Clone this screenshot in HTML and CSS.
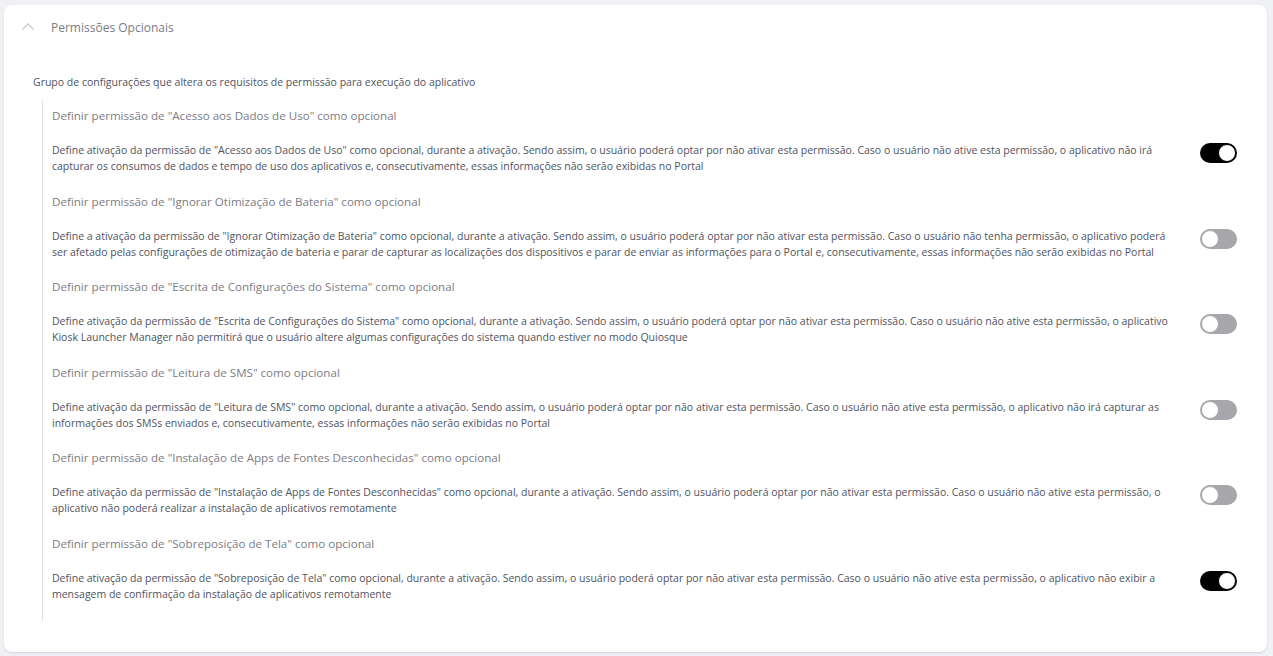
FILE: index.html
```html
<!DOCTYPE html>
<html lang="pt-BR">
<head>
<meta charset="utf-8">
<title>Permissões Opcionais</title>
<link rel="stylesheet" href="styles.css">
</head>
<body>
<div class="card">
  <div class="card-header">
    <svg class="chevron" width="14" height="9" viewBox="0 0 14 9"><path d="M1.5 7.5 L7 2 L12.5 7.5" fill="none" stroke="#d3d3d6" stroke-width="1.6"/></svg>
    <span class="card-title">Permissões Opcionais</span>
  </div>
  <div class="card-body">
    <p class="group-desc">Grupo de configurações que altera os requisitos de permissão para execução do aplicativo</p>
    <div class="group">
      <div class="item">
        <div class="item-title">Definir permissão de "Acesso aos Dados de Uso" como opcional</div>
        <div class="item-row">
          <p class="item-desc">Define ativação da permissão de "Acesso aos Dados de Uso" como opcional, durante a ativação. Sendo assim, o usuário poderá optar por não ativar esta permissão. Caso o usuário não ative esta permissão, o aplicativo não irá capturar os consumos de dados e tempo de uso dos aplicativos e, consecutivamente, essas informações não serão exibidas no Portal</p>
          <span class="toggle on"><span class="knob"></span></span>
        </div>
      </div>
      <div class="item">
        <div class="item-title">Definir permissão de "Ignorar Otimização de Bateria" como opcional</div>
        <div class="item-row">
          <p class="item-desc">Define a ativação da permissão de "Ignorar Otimização de Bateria" como opcional, durante a ativação. Sendo assim, o usuário poderá optar por não ativar esta permissão. Caso o usuário não tenha permissão, o aplicativo poderá ser afetado pelas configurações de otimização de bateria e parar de capturar as localizações dos dispositivos e parar de enviar as informações para o Portal e, consecutivamente, essas informações não serão exibidas no Portal</p>
          <span class="toggle"><span class="knob"></span></span>
        </div>
      </div>
      <div class="item">
        <div class="item-title">Definir permissão de "Escrita de Configurações do Sistema" como opcional</div>
        <div class="item-row">
          <p class="item-desc">Define ativação da permissão de "Escrita de Configurações do Sistema" como opcional, durante a ativação. Sendo assim, o usuário poderá optar por não ativar esta permissão. Caso o usuário não ative esta permissão, o aplicativo Kiosk Launcher Manager não permitirá que o usuário altere algumas configurações do sistema quando estiver no modo Quiosque</p>
          <span class="toggle"><span class="knob"></span></span>
        </div>
      </div>
      <div class="item">
        <div class="item-title">Definir permissão de "Leitura de SMS" como opcional</div>
        <div class="item-row">
          <p class="item-desc">Define ativação da permissão de "Leitura de SMS" como opcional, durante a ativação. Sendo assim, o usuário poderá optar por não ativar esta permissão. Caso o usuário não ative esta permissão, o aplicativo não irá capturar as informações dos SMSs enviados e, consecutivamente, essas informações não serão exibidas no Portal</p>
          <span class="toggle"><span class="knob"></span></span>
        </div>
      </div>
      <div class="item">
        <div class="item-title">Definir permissão de "Instalação de Apps de Fontes Desconhecidas" como opcional</div>
        <div class="item-row">
          <p class="item-desc">Define ativação da permissão de "Instalação de Apps de Fontes Desconhecidas" como opcional, durante a ativação. Sendo assim, o usuário poderá optar por não ativar esta permissão. Caso o usuário não ative esta permissão, o aplicativo não poderá realizar a instalação de aplicativos remotamente</p>
          <span class="toggle"><span class="knob"></span></span>
        </div>
      </div>
      <div class="item">
        <div class="item-title">Definir permissão de "Sobreposição de Tela" como opcional</div>
        <div class="item-row">
          <p class="item-desc">Define ativação da permissão de "Sobreposição de Tela" como opcional, durante a ativação. Sendo assim, o usuário poderá optar por não ativar esta permissão. Caso o usuário não ative esta permissão, o aplicativo não exibir a mensagem de confirmação da instalação de aplicativos remotamente</p>
          <span class="toggle on"><span class="knob"></span></span>
        </div>
      </div>
    </div>
  </div>
</div>
</body>
</html>
```
FILE: styles.css
```css
* { box-sizing: border-box; }
html, body { margin: 0; padding: 0; }
body {
  background: #f0f1f5;
  font-family: "Open Sans", "Noto Sans", sans-serif;
  padding: 5px 6px 4px 4px;
  height: 656px;
}
.card {
  background: #fff;
  border-radius: 8px;
  box-shadow: 0 1px 2px rgba(0,0,0,0.12);
  height: 647px;
  padding: 0;
}
.card-header {
  display: flex;
  align-items: center;
  height: 44px;
  padding-left: 17px;
}
.chevron { display: block; margin-right: 16px; margin-top: -1px; }
.card-title {
  font-size: 12px;
  color: #7c7c85;
}
.card-body {
  padding: 25px 0 0 29px;
}
.group-desc {
  margin: 0 0 10px 0;
  font-size: 10.5px;
  line-height: 16px;
  color: #4f5360;
}
.group {
  margin-left: 9px;
  border-left: 1px solid #e2e2e4;
  padding: 7px 0 19px 9px;
}
.item { padding-bottom: 18.6px; }
.item:last-child { padding-bottom: 0; }
.item-title {
  font-size: 11.6px;
  line-height: 18px;
  color: #7c7c85;
  margin-bottom: 17px;
}
.item-row {
  display: flex;
  align-items: center;
  justify-content: space-between;
}
.item-desc {
  margin: 0;
  width: 1125px;
  font-size: 10.5px;
  line-height: 16px;
  color: #4f5360;
}
.toggle {
  position: relative;
  display: block;
  width: 37px;
  height: 20px;
  border-radius: 10px;
  background: #a6a6ab;
  margin-right: 30px;
  margin-top: -10px;
  flex: none;
}
.toggle .knob {
  position: absolute;
  top: 1px;
  left: 1px;
  width: 18px;
  height: 18px;
  border-radius: 50%;
  background: #fff;
  border: 1px solid #a6a6ab;
}
.toggle.on { background: #000; }
.toggle.on .knob {
  left: auto;
  right: 1px;
  border-color: #000;
}
```
